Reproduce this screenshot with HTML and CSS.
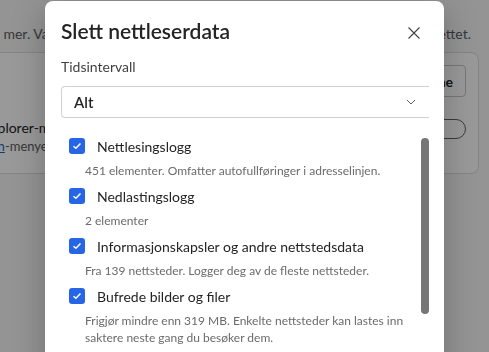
FILE: index.html
```html
<!DOCTYPE html>
<html lang="nb">
<head>
    <meta charset="UTF-8">
    <meta name="viewport" content="width=device-width, initial-scale=1.0">
    <title>Slett nettleserdata</title>
    <link rel="stylesheet" href="styles.css">
</head>
<body>
    <div class="page">
        <div class="intro">
            <span class="intro-left">Dette omfatter data fra enheten. Les mer. Varer</span>
            <span class="intro-right">slettet.</span>
        </div>
        <div class="card">
            <div class="card-row">
                <div class="card-text"></div>
                <button class="ghost-button">Velg hva du vil fjerne</button>
            </div>
            <div class="card-row">
                <div class="card-text">
                    <div class="clip"><span>Internet Explorer-modus</span></div>
                    <div class="clip small"><span>Åpne fra <a href="#">Innstillingen</a>-menyen</span></div>
                </div>
                <button class="pill-button">Velg</button>
            </div>
        </div>
    </div>

    <div class="overlay"></div>

    <div class="dialog">
        <div class="dialog-header">
            <h1>Slett nettleserdata</h1>
            <button class="close-button" aria-label="Lukk">
                <svg width="12" height="12" viewBox="0 0 12 12"><path d="M0.5 0.5 L11.5 11.5 M11.5 0.5 L0.5 11.5" stroke="#424242" stroke-width="1.1" fill="none"/></svg>
            </button>
        </div>

        <label class="field-label" for="range">Tidsintervall</label>
        <div class="select" id="range">
            <span>Alt</span>
            <svg width="10" height="6" viewBox="0 0 10 6"><path d="M1 1 L5 5 L9 1" stroke="#616161" stroke-width="1" fill="none"/></svg>
        </div>

        <div class="list-wrap">
            <div class="list">
                <div class="item">
                    <div class="item-row">
                        <span class="check"><svg width="10" height="8" viewBox="0 0 10 8"><path d="M1.5 4.2 L3.9 6.3 L8.5 1.6" stroke="#fff" stroke-width="1.5" fill="none"/></svg></span>
                        <span class="item-title">Nettlesingslogg</span>
                    </div>
                    <p class="item-desc">451 elementer. Omfatter autofullføringer i adresselinjen.</p>
                </div>
                <div class="item">
                    <div class="item-row">
                        <span class="check"><svg width="10" height="8" viewBox="0 0 10 8"><path d="M1.5 4.2 L3.9 6.3 L8.5 1.6" stroke="#fff" stroke-width="1.5" fill="none"/></svg></span>
                        <span class="item-title">Nedlastingslogg</span>
                    </div>
                    <p class="item-desc">2 elementer</p>
                </div>
                <div class="item">
                    <div class="item-row">
                        <span class="check"><svg width="10" height="8" viewBox="0 0 10 8"><path d="M1.5 4.2 L3.9 6.3 L8.5 1.6" stroke="#fff" stroke-width="1.5" fill="none"/></svg></span>
                        <span class="item-title">Informasjonskapsler og andre nettstedsdata</span>
                    </div>
                    <p class="item-desc">Fra 139 nettsteder. Logger deg av de fleste nettsteder.</p>
                </div>
                <div class="item">
                    <div class="item-row">
                        <span class="check"><svg width="10" height="8" viewBox="0 0 10 8"><path d="M1.5 4.2 L3.9 6.3 L8.5 1.6" stroke="#fff" stroke-width="1.5" fill="none"/></svg></span>
                        <span class="item-title">Bufrede bilder og filer</span>
                    </div>
                    <p class="item-desc">Frigjør mindre enn 319 MB. Enkelte nettsteder kan lastes inn<br>saktere neste gang du besøker dem.</p>
                </div>
            </div>
            <div class="scroll-track"><div class="scroll-thumb"></div></div>
        </div>
    </div>
</body>
</html>
```

FILE: styles.css
```css
body {
    margin: 0;
    width: 489px;
    height: 352px;
    overflow: hidden;
    background-color: #f7f7f7;
    font-family: Lato, Roboto, sans-serif;
    color: #242424;
}
.page {
    padding-top: 24px;
}
.intro {
    display: flex;
    justify-content: space-between;
    font-size: 14px;
    line-height: 20px;
    color: #5d5d5d;
    padding-right: 18px;
    height: 20px;
    overflow: hidden;
}
.intro-left {
    display: flex;
    justify-content: flex-end;
    width: 66px;
    overflow: hidden;
    white-space: nowrap;
}
.card {
    margin: 8px 10px 0 -20px;
    border: 1px solid #dcdcdc;
    border-radius: 8px;
    background-color: #fff;
    height: 122px;
    box-sizing: border-box;
    padding: 12px 12px 0 0;
}
.card-row {
    display: flex;
    justify-content: space-between;
    align-items: flex-start;
}
.card-row + .card-row {
    margin-top: 22px;
}
.card-text {
    font-size: 14px;
    line-height: 18px;
}
.clip {
    display: flex;
    justify-content: flex-end;
    width: 99px;
    overflow: hidden;
    white-space: nowrap;
}
.clip.small {
    width: 74px;
    font-size: 13px;
    color: #5d5d5d;
}
.clip a {
    color: #0f6cbd;
}
.ghost-button {
    height: 32px;
    padding: 0 12px;
    border: 1px solid #c7c7c7;
    border-radius: 4px;
    background-color: #fff;
    font-family: inherit;
    font-size: 14px;
    font-weight: 700;
    color: #242424;
    white-space: nowrap;
}
.pill-button {
    height: 20px;
    width: 60px;
    border: 1px solid #616161;
    border-radius: 10px;
    background-color: #fff;
    font-size: 0;
}
.overlay {
    position: fixed;
    inset: 0;
    background-color: rgba(0, 0, 0, 0.4);
}
.dialog {
    position: absolute;
    top: 1px;
    left: 45px;
    width: 399px;
    height: 400px;
    box-sizing: border-box;
    padding: 14px 15px 0 16px;
    background-color: #fff;
    border-radius: 8px;
    box-shadow: 0 8px 32px rgba(0, 0, 0, 0.25);
}
.dialog-header {
    display: flex;
    justify-content: space-between;
    align-items: center;
    height: 30px;
}
h1 {
    margin: 0;
    font-size: 21px;
    font-weight: 600;
    color: #242424;
}
.close-button {
    display: flex;
    border: none;
    background: none;
    padding: 0;
    margin: 6px 9px 0 0;
}
.field-label {
    display: block;
    margin-top: 12px;
    font-size: 14px;
    line-height: 20px;
    color: #424242;
}
.select {
    display: flex;
    justify-content: space-between;
    align-items: center;
    margin-top: 9px;
    height: 32px;
    box-sizing: border-box;
    padding: 0 13px 0 12px;
    border: 1px solid #d1d1d1;
    border-right: none;
    border-radius: 4px 0 0 4px;
    font-size: 15px;
    font-weight: 600;
}
.list-wrap {
    display: flex;
    margin-top: 20px;
}
.list {
    flex: 1;
}
.item {
    padding: 0 0 9px 8px;
}
.item-row {
    display: flex;
    align-items: center;
    height: 16px;
}
.check {
    display: flex;
    align-items: center;
    justify-content: center;
    width: 16px;
    height: 16px;
    border-radius: 3px;
    background-color: #2666e6;
    margin-right: 12px;
}
.item-title {
    font-size: 14px;
    color: #242424;
}
.item-desc {
    margin: 8px 0 0 16px;
    font-size: 12px;
    line-height: 17px;
    color: #6b6b6b;
    white-space: nowrap;
}
.scroll-track {
    width: 8px;
}
.scroll-thumb {
    height: 176px;
    border-radius: 4px;
    background-color: #767676;
}
```
